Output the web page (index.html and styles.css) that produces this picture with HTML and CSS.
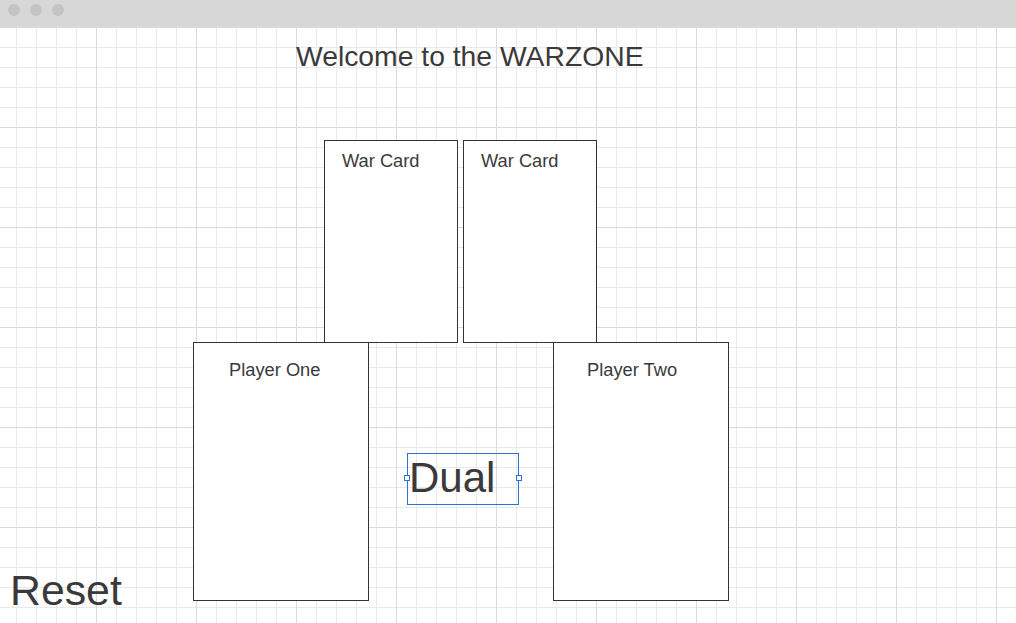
FILE: index.html
```html
<!DOCTYPE html>
<html lang="en">
<head>
<meta charset="utf-8">
<title>Welcome to the WARZONE</title>
<link rel="stylesheet" href="styles.css">
</head>
<body>
  <div class="topbar">
    <span class="dot"></span>
    <span class="dot"></span>
    <span class="dot"></span>
  </div>
  <main class="canvas">
    <h1 class="title">Welcome to the WARZONE</h1>
    <div class="war-row">
      <div class="card war-card"><span class="label">War Card</span></div>
      <div class="card war-card"><span class="label">War Card</span></div>
    </div>
    <div class="bottom-row">
      <div class="reset-col"><span class="reset">Reset</span></div>
      <div class="card player-card player-one"><span class="label">Player One</span></div>
      <div class="middle-col">
        <div class="dual-box">
          <span class="dual">Dual</span>
          <span class="handle handle-left"></span>
          <span class="handle handle-right"></span>
        </div>
      </div>
      <div class="card player-card player-two"><span class="label">Player Two</span></div>
    </div>
  </main>
</body>
</html>
```
FILE: styles.css
```css
html, body {
  margin: 0;
  padding: 0;
}

body {
  width: 1016px;
  height: 623px;
  overflow: hidden;
  font-family: "Liberation Sans", Arial, sans-serif;
  color: #3a3a3a;
  background: #ffffff;
}

.topbar {
  height: 27px;
  box-sizing: border-box;
  background: #d7d7d7;
  display: flex;
  gap: 10px;
  padding: 4px 0 0 8px;
}

.dot {
  width: 12px;
  height: 12px;
  border-radius: 50%;
  background: #c4c4c4;
}

.canvas {
  height: 596px;
  box-sizing: border-box;
  padding-top: 13px;
  overflow: hidden;
  background-color: #ffffff;
  background-image:
    linear-gradient(to right, #dbdbdb 1px, transparent 1px),
    linear-gradient(to bottom, #dbdbdb 1px, transparent 1px),
    linear-gradient(to right, #e9e9e9 1px, transparent 1px),
    linear-gradient(to bottom, #e9e9e9 1px, transparent 1px);
  background-size: 100px 100px, 100px 100px, 20px 20px, 20px 20px;
  background-position: 96px 0, 0 0, 16px 0, 0 0;
}

.title {
  margin: 0 0 0 296px;
  font-size: 28.3px;
  line-height: 32px;
  font-weight: normal;
}

.war-row {
  display: flex;
  gap: 5px;
  margin: 68px 0 0 324px;
}

.card {
  box-sizing: border-box;
  background: #ffffff;
  border: 1px solid #333333;
  font-size: 18.3px;
  line-height: 21px;
}

.war-card {
  width: 134px;
  height: 203px;
  padding: 9px 0 0 17px;
}

.bottom-row {
  display: flex;
  align-items: flex-start;
  margin-top: -1px;
}

.reset-col {
  width: 193px;
  box-sizing: border-box;
  padding: 224px 0 0 10px;
}

.reset {
  display: block;
  font-size: 42.8px;
  line-height: 48px;
}

.player-card {
  width: 176px;
  height: 259px;
  padding-top: 16px;
}

.player-one {
  padding-left: 35px;
}

.player-two {
  padding-left: 33px;
}

.middle-col {
  width: 184px;
  padding-top: 111px;
}

.dual-box {
  position: relative;
  margin-left: 38px;
  width: 110px;
  height: 50px;
  box-sizing: content-box;
  border: 1px solid #2f6fdc;
  padding: 0;
}

.dual {
  display: block;
  padding-left: 1px;
  font-size: 42px;
  line-height: 48px;
}

.handle {
  position: absolute;
  top: 21px;
  width: 4px;
  height: 4px;
  border: 1px solid #2f6fdc;
  background: #ffffff;
}

.handle-left {
  left: -4px;
}

.handle-right {
  right: -4px;
}
```
